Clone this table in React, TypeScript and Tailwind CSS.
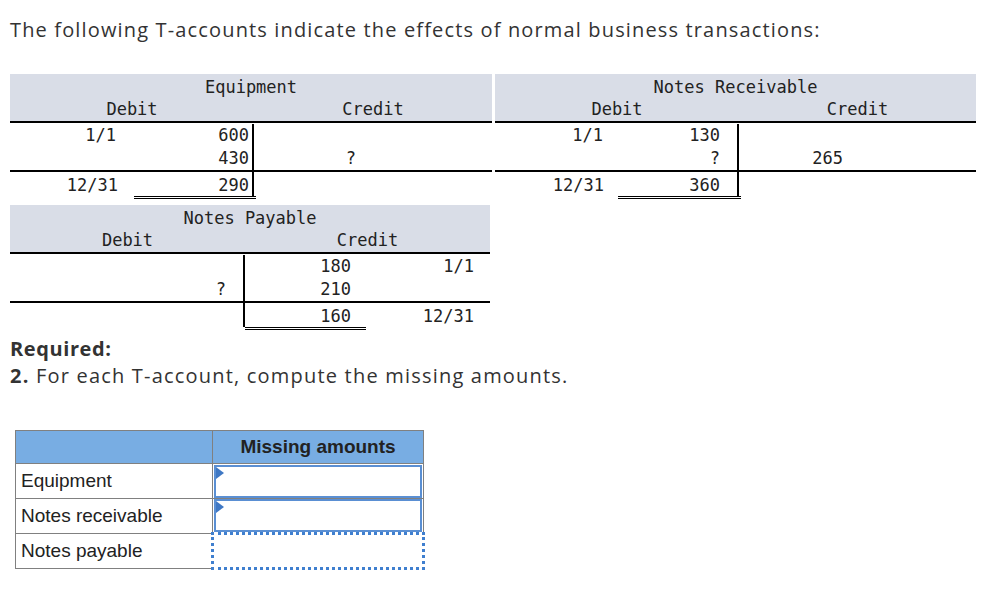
import React from 'react';

type Row = { cells: string[]; pads: string[] };

const mono = { fontFamily: '"DejaVu Sans Mono", "Liberation Mono", monospace' };
const sans = { fontFamily: '"Open Sans", sans-serif' };

const TAccount = ({
  title,
  cols,
  rows,
  total,
  underline,
  className,
}: {
  title: string;
  cols: number[];
  rows: Row[];
  total: Row;
  underline: [number, number];
  className?: string;
}) => {
  const split = cols[0] + cols[1];
  const width = cols.reduce((a, b) => a + b, 0);
  const Cells = ({ row, h }: { row: Row; h: string }) => (
    <div className="flex">
      {row.cells.map((c, i) => (
        <div
          key={i}
          style={{ width: cols[i] }}
          className={`${h} flex items-center justify-end ${row.pads[i]} ${i === 1 ? 'border-r-2 border-black' : ''}`}
        >
          {c}
        </div>
      ))}
    </div>
  );
  return (
    <div style={{ ...mono, width }} className={`text-[17px] text-[#222] ${className ?? ''}`}>
      <div className="bg-[#d9dde7] pt-[2px] h-[47px]">
        <div className="h-[22px] leading-[22px] text-center">{title}</div>
        <div className="flex h-[22px] leading-[22px]">
          <div style={{ width: split }} className="text-center">Debit</div>
          <div style={{ width: width - split }} className="text-center">Credit</div>
        </div>
      </div>
      <div className="border-t-2 border-black pt-px">
        {rows.map((r, i) => (
          <Cells key={i} row={r} h="h-[23px]" />
        ))}
      </div>
      <div className="border-t-2 border-black">
        <Cells row={total} h="h-[24px] pt-[3px]" />
      </div>
      <div className="flex">
        <div style={{ marginLeft: underline[0], width: underline[1] - underline[0] }} className="h-[3px] border-y border-black" />
      </div>
    </div>
  );
};

export default function App() {
  return (
    <div className="w-[994px] h-[592px] bg-white text-[#333] relative overflow-hidden">
      <p className="pl-[10px] pt-[17px] text-[20px] leading-[26px] tracking-[1.15px]" style={sans}>
        The following T-accounts indicate the effects of normal business transactions:
      </p>

      <div className="flex mt-[31px]">
        <div className="ml-[10px] flex flex-col gap-[6px]">
          <TAccount
            title="Equipment"
            cols={[124, 120, 118, 120]}
            rows={[
              { cells: ['1/1', '600', '', ''], pads: ['pr-[18px]', 'pr-[3px]', 'pr-[16px]', ''] },
              { cells: ['', '430', '?', ''], pads: ['pr-[18px]', 'pr-[3px]', 'pr-[16px]', ''] },
            ]}
            total={{ cells: ['12/31', '290', '', ''], pads: ['pr-[16px]', 'pr-[3px]', '', ''] }}
            underline={[124, 246]}
          />
          <TAccount
            title="Notes Payable"
            cols={[118, 117, 121, 124]}
            rows={[
              { cells: ['', '', '180', '1/1'], pads: ['', 'pr-[17px]', 'pr-[15px]', 'pr-[16px]'] },
              { cells: ['', '?', '210', ''], pads: ['', 'pr-[17px]', 'pr-[15px]', 'pr-[16px]'] },
            ]}
            total={{ cells: ['', '', '160', '12/31'], pads: ['', '', 'pr-[15px]', 'pr-[16px]'] }}
            underline={[235, 356]}
          />
        </div>
        <TAccount
          className="ml-[3px]"
          title="Notes Receivable"
          cols={[123, 121, 119, 118]}
          rows={[
            { cells: ['1/1', '130', '', ''], pads: ['pr-[15px]', 'pr-[17px]', '', ''] },
            { cells: ['', '?', '265', ''], pads: ['pr-[15px]', 'pr-[17px]', 'pr-[15px]', ''] },
          ]}
          total={{ cells: ['12/31', '360', '', ''], pads: ['pr-[14px]', 'pr-[17px]', '', ''] }}
          underline={[123, 246]}
        />
      </div>

      <div className="pl-[10px] mt-[5px] text-[20px] leading-[27px] tracking-[1.2px]" style={sans}>
        <p className="font-bold tracking-[0.6px]">Required:</p>
        <p>
          <span className="font-bold">2.</span> For each T-account, compute the missing amounts.
        </p>
      </div>

      <table
        className="ml-[15px] mt-[41px] border-collapse text-[19px] text-[#222]"
        style={{ fontFamily: '"Liberation Sans", Arial, sans-serif' }}
      >
        <tbody>
          <tr className="h-[33px] bg-[#78ade3]">
            <td className="w-[197px] border border-[#808080]" />
            <td className="w-[211px] border border-[#808080] text-center font-bold">Missing amounts</td>
          </tr>
          {['Equipment', 'Notes receivable'].map((label) => (
            <tr key={label} className="h-[35px]">
              <td className="border border-[#808080] pl-[5px]">{label}</td>
              <td className="border border-[#808080] p-0">
                <div className="relative h-[33px] mx-px border-2 border-[#5a8fd3]">
                  <div className="absolute left-0 top-0 w-0 h-0 border-y-[6px] border-y-transparent border-l-[8px] border-l-[#3f78c4]" />
                </div>
              </td>
            </tr>
          ))}
          <tr className="h-[35px]">
            <td className="border border-[#808080] pl-[5px]">Notes payable</td>
            <td className="p-0 border-[3px] border-dotted border-[#3f7fcf]" />
          </tr>
        </tbody>
      </table>
    </div>
  );
}
